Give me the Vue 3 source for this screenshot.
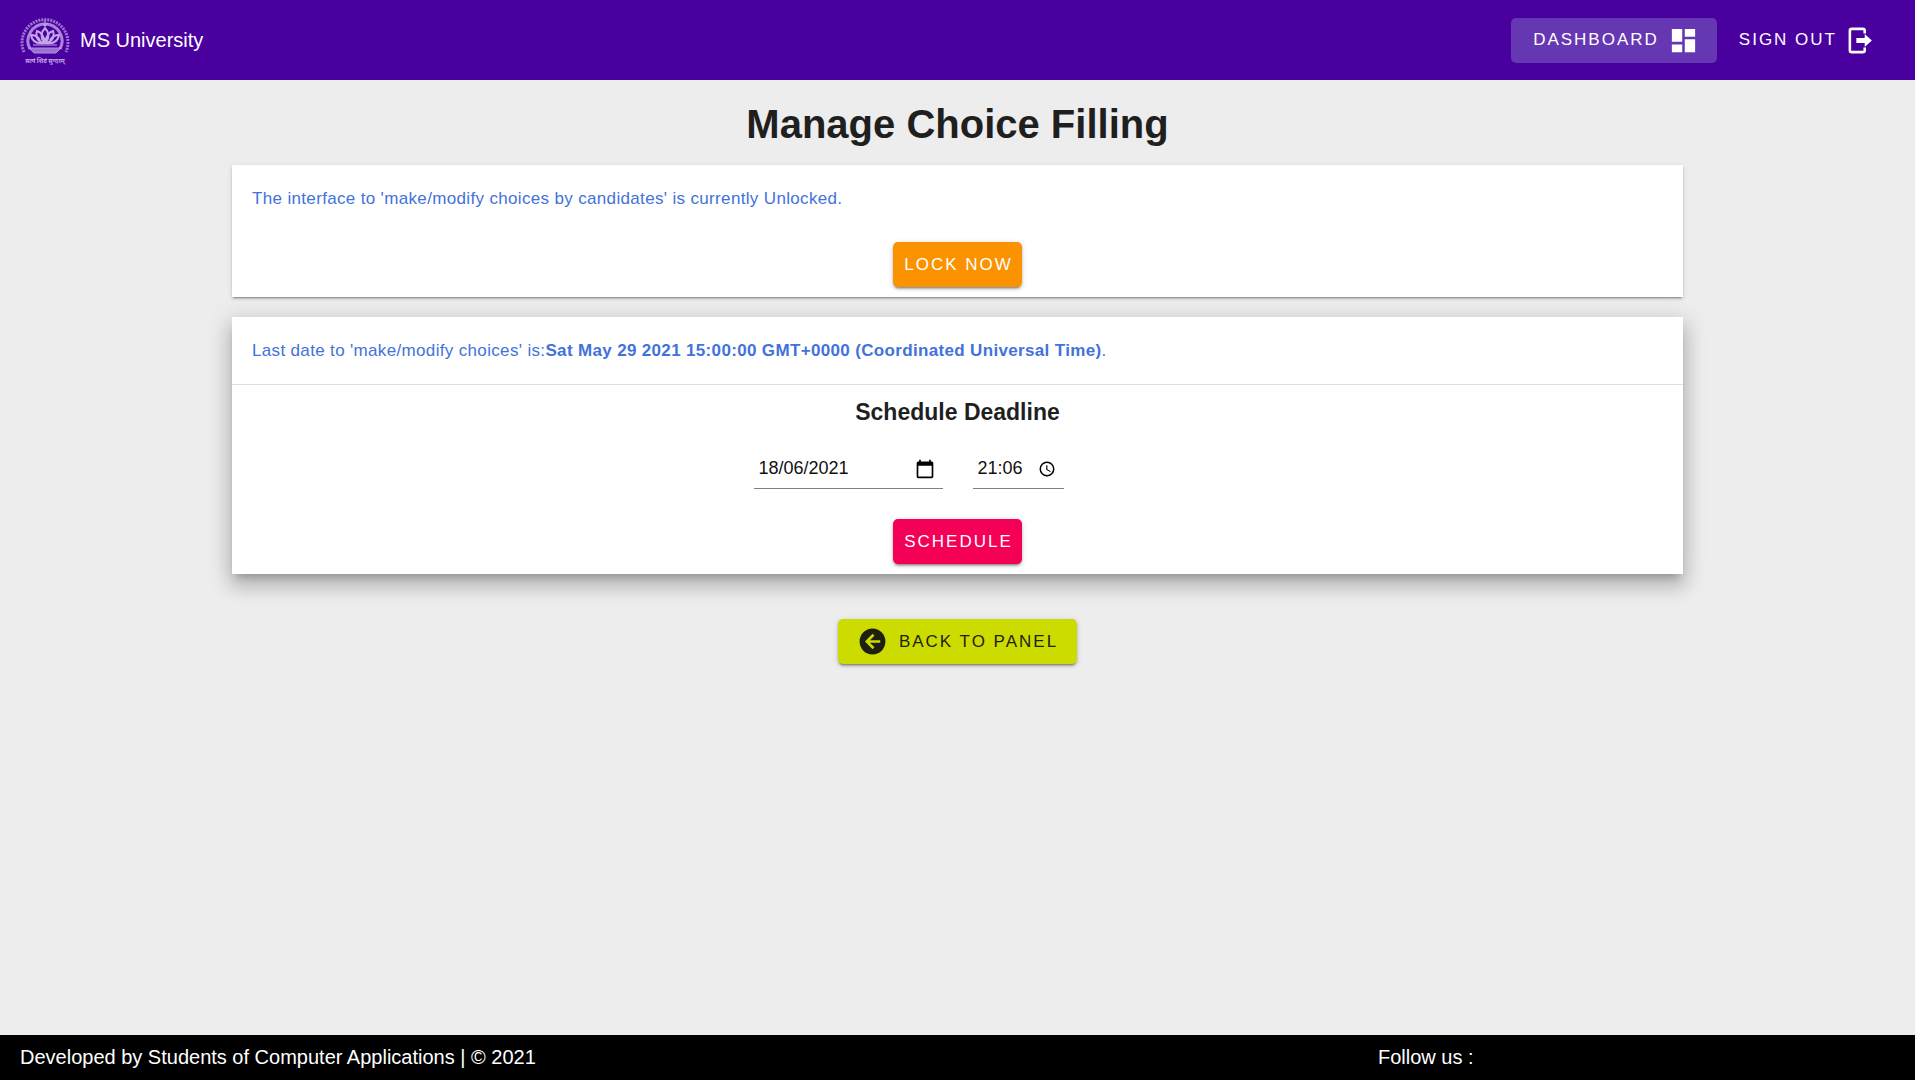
<script setup>
import { ref } from 'vue'

const locked = ref(false)
const deadline = ref('Sat May 29 2021 15:00:00 GMT+0000 (Coordinated Universal Time)')
const date = ref('18/06/2021')
const time = ref('21:06')
</script>

<template>
  <div class="page">
    <header class="topbar">
      <a class="brand" href="#">
        <svg class="crest" viewBox="0 0 50 50" aria-hidden="true">
          <g fill="none" stroke="#c3a6ea">
            <path d="M4 37A23 23 0 1 1 46 37" stroke-width="3" stroke-dasharray="2 1" opacity=".7" />
            <path d="M10 34A17 17 0 1 1 40 34" stroke-width="3" opacity=".8" />
            <path d="M9 33H41L36 38H14Z" fill="#a888dc" stroke-width="1" opacity=".85" />
            <path d="M13 30H37" stroke-width="1" />
            <path d="M25 28C20 23 21 17 25 13C29 17 30 23 25 28Z" stroke-width="2" />
            <path d="M25 28C18 27 15 22 17 16C21 17 24 22 25 28C26 22 29 17 33 16C35 22 32 27 25 28" stroke-width="2" />
            <path d="M24 28C16 29 12 26 11 20C15 20 18 22 20 25M26 28C34 29 38 26 39 20C35 20 32 22 30 25" stroke-width="2" />
            <path d="M25 5V12M22 8L25 11L28 8" stroke-width="1" />
          </g>
          <text class="motto" x="25" y="48" text-anchor="middle">सत्यं शिवं सुन्दरम्</text>
        </svg>
        <span>MS University</span>
      </a>
      <nav class="nav">
        <button type="button" class="btn nav-btn active">
          Dashboard
          <svg class="icon" viewBox="0 0 24 24" aria-hidden="true"><path d="M3 13h8V3H3v10zm0 8h8v-6H3v6zm10 0h8V11h-8v10zm0-18v6h8V3h-8z" /></svg>
        </button>
        <button type="button" class="btn nav-btn">
          Sign out
          <svg class="icon" viewBox="0 0 24 24" aria-hidden="true"><path d="M14.500 6.500V4.500Q14.500 3 13 3H4.500Q3 3 3 4.500V19.500Q3 21 4.500 21H13Q14.500 21 14.500 19.500V17.500" fill="none" stroke="currentColor" stroke-width="2" /><path d="M8 10H14.500V7L20 12L14.500 17V14H8Z" /></svg>
        </button>
      </nav>
    </header>

    <main class="content">
      <h1>Manage Choice Filling</h1>

      <section class="card">
        <p class="info">The interface to 'make/modify choices by candidates' is currently {{ locked ? 'Locked' : 'Unlocked' }}.</p>
        <button type="button" class="btn raised lock">Lock now</button>
      </section>

      <section class="card high">
        <p class="info ruled">Last date to 'make/modify choices' is:<b>{{ deadline }}</b>.</p>
        <h2>Schedule Deadline</h2>
        <form class="fields" @submit.prevent>
          <label class="field date">
            <input v-model="date" type="text" aria-label="Date">
            <svg class="picker" viewBox="0 0 24 24" aria-hidden="true"><path d="M20 3h-1V1h-2v2H7V1H5v2H4c-1.100 0-2 .9-2 2v16c0 1.100.9 2 2 2h16c1.100 0 2-.9 2-2V5c0-1.100-.9-2-2-2zm0 18H4V8h16v13z" /></svg>
          </label>
          <label class="field time">
            <input v-model="time" type="text" aria-label="Time">
            <svg class="picker clock" viewBox="0 0 24 24" aria-hidden="true"><path d="M12 2a10 10 0 1 0 0 20a10 10 0 0 0 0-20zm0 18a8 8 0 1 1 0-16a8 8 0 0 1 0 16zM12.500 7H11v6l5.250 3.150.75-1.230-4.500-2.670z" /></svg>
          </label>
        </form>
        <button type="button" class="btn raised schedule">Schedule</button>
      </section>

      <button type="button" class="btn raised back">
        <svg class="icon" viewBox="0 0 24 24" aria-hidden="true"><path d="M2 12A10 10 0 0 1 12 2A10 10 0 0 1 22 12A10 10 0 0 1 12 22A10 10 0 0 1 2 12M18 11H10L13.500 7.500L12.080 6.080L6.160 12L12.080 17.920L13.500 16.500L10 13H18V11Z" /></svg>
        Back to panel
      </button>
    </main>

    <footer class="footer">
      <span>Developed by Students of Computer Applications | © 2021</span>
      <span class="follow">Follow us :</span>
    </footer>
  </div>
</template>

<style>
body {
  background: #fff;
}
</style>

<style scoped>
.page {
  display: flex;
  flex-direction: column;
  min-height: 100vh;
  margin-right: 5px;
  background: #ededed;
  color: #1f1f1f;
  font-family: "Liberation Sans", Arial, sans-serif;
  font-size: 18px;
}
.topbar {
  display: flex;
  align-items: center;
  justify-content: space-between;
  height: 80px;
  padding: 0 20px;
  background: #4a009f;
  color: #fff;
}
.brand {
  display: flex;
  align-items: center;
  gap: 10px;
  color: inherit;
  font-size: 20px;
  line-height: 22px;
  text-decoration: none;
}
.crest {
  width: 50px;
  height: 50px;
}
.motto {
  fill: #c3a6ea;
  font-family: "Noto Sans", sans-serif;
  font-size: 6px;
  font-weight: 700;
}
.nav {
  display: flex;
}
.btn {
  display: inline-flex;
  align-items: center;
  justify-content: center;
  height: 45px;
  padding: 0 9px 0 11px;
  border: 0;
  border-radius: 5px;
  background: transparent;
  color: inherit;
  font-family: inherit;
  font-size: 17px;
  letter-spacing: 2px;
  text-transform: uppercase;
  white-space: nowrap;
  cursor: pointer;
}
.nav-btn {
  gap: 9px;
  padding: 0 18px 0 22px;
}
.nav-btn.active {
  background: #6637b3;
}
.icon {
  width: 31px;
  height: 31px;
  fill: currentColor;
}
.raised {
  box-shadow: 0 3px 2px -2px rgba(0, 0, 0, 0.3), 0 2px 3px rgba(0, 0, 0, 0.2), 0 1px 6px rgba(0, 0, 0, 0.12);
}
.lock {
  background: #fb9200;
  color: #fff;
}
.schedule {
  background: #f50057;
  color: #fff;
}
.back {
  gap: 11px;
  margin-top: 45px;
  padding: 0 19px;
  background: #cddc00;
  color: #1f1f10;
}
.content {
  display: flex;
  flex: 1;
  flex-direction: column;
  align-items: center;
}
h1 {
  margin: 20px 0 17px;
  font-size: 40px;
  line-height: 48px;
}
.card {
  display: flex;
  flex-direction: column;
  align-items: center;
  box-sizing: border-box;
  width: calc(100% - 464px);
  padding-bottom: 10px;
  background: #fff;
  box-shadow: 0 3px 1px -2px rgba(0, 0, 0, 0.2), 0 2px 2px rgba(0, 0, 0, 0.14), 0 1px 5px rgba(0, 0, 0, 0.12);
}
.card.high {
  margin-top: 20px;
  box-shadow: 0 7px 8px -4px rgba(0, 0, 0, 0.2), 0 12px 17px 2px rgba(0, 0, 0, 0.14), 0 5px 22px 4px rgba(0, 0, 0, 0.12);
}
.info {
  align-self: stretch;
  margin: 0;
  padding: 21px 20px 30px;
  color: #4272dc;
  font-size: 17px;
  letter-spacing: 0.02em;
  line-height: 26px;
}
.info.ruled {
  padding-bottom: 20px;
  border-bottom: 1px solid #e0e0e0;
}
h2 {
  margin: 13px 0 14px;
  font-size: 23px;
  line-height: 28px;
}
.fields {
  display: flex;
  gap: 30px;
  margin: 9px 0 30px;
  padding-right: 98px;
}
.field {
  display: flex;
  align-items: center;
  box-sizing: border-box;
  height: 40px;
  border-bottom: 1px solid #808080;
}
.date {
  width: 189px;
  padding: 0 8px 0 5px;
}
.time {
  width: 91px;
  padding: 0 8px 0 5px;
}
.field input {
  flex: 1;
  min-width: 0;
  padding: 0;
  border: 0;
  outline: 0;
  background: transparent;
  color: #111;
  font-family: inherit;
  font-size: 18px;
}
.picker {
  width: 20px;
  height: 20px;
}
.clock {
  width: 18px;
}
.footer {
  display: flex;
  align-items: center;
  height: 45px;
  padding: 0 20px;
  background: #000;
  color: #fff;
  font-size: 20px;
}
.follow {
  width: 517px;
  margin-left: auto;
}
</style>
